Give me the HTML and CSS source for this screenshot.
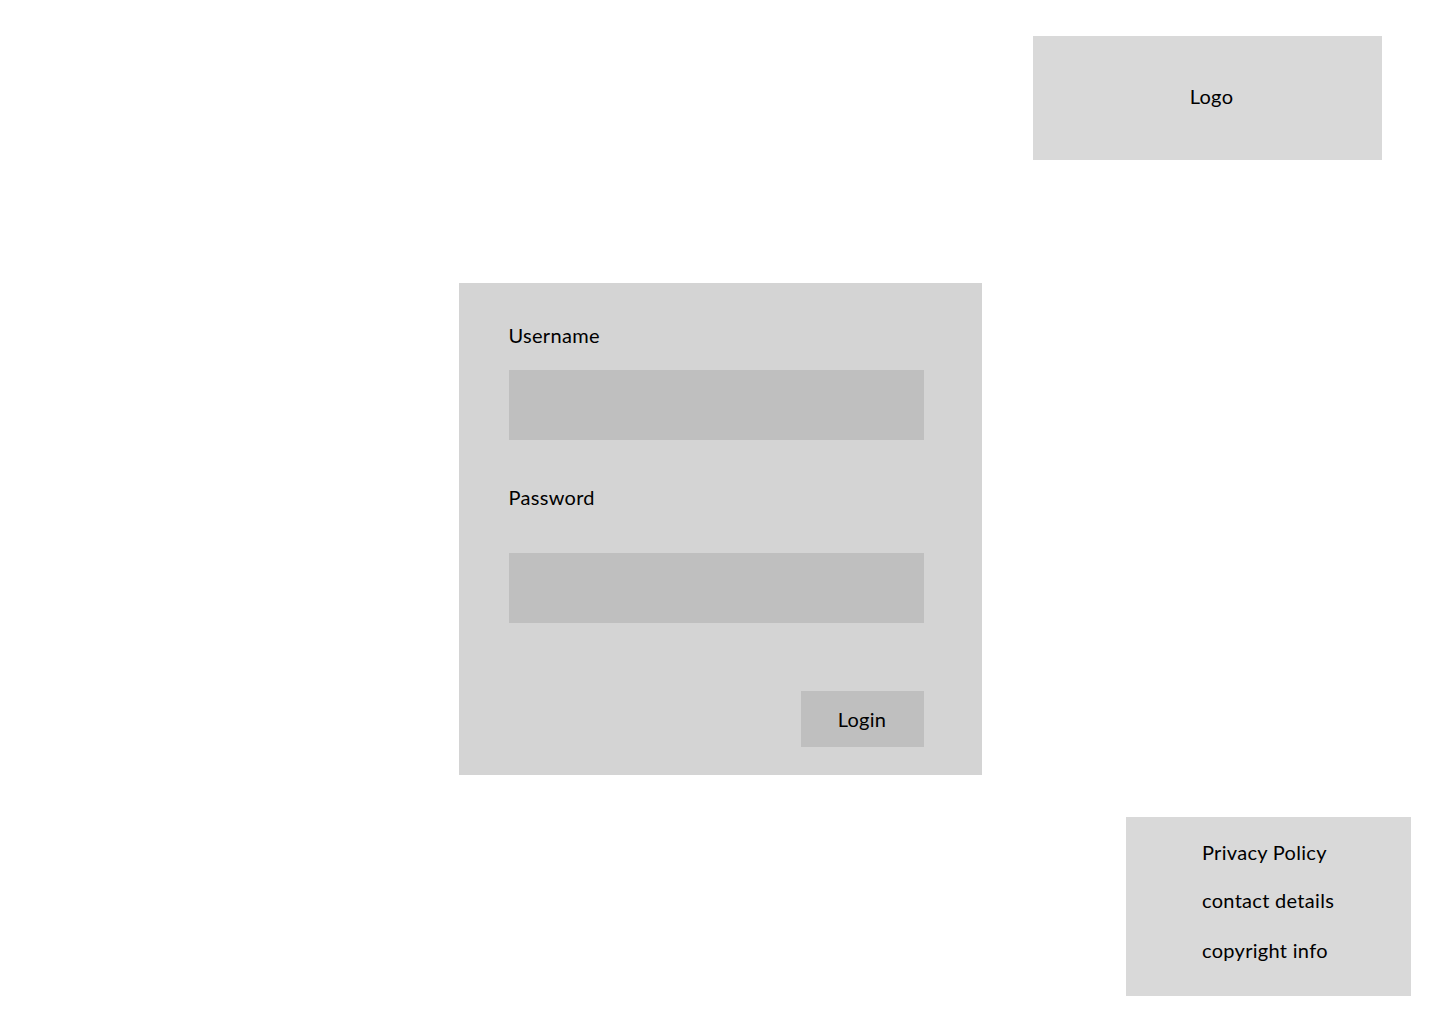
FILE: index.html
```html
<!DOCTYPE html>
<html lang="en">
  <head>
    <meta charset="UTF-8" />
    <meta name="viewport" content="width=device-width, initial-scale=1.0" />
    <title>Login</title>
    <link rel="stylesheet" href="styles.css">
  </head>
  <body>
    <header class="header">
      <div class="logo">Logo</div>
    </header>

    <main class="main">
      <form class="login-card" onsubmit="return false">
        <label class="field-label" for="username">Username</label>
        <input class="field-input" id="username" type="text" />

        <label class="field-label password-label" for="password">Password</label>
        <input class="field-input" id="password" type="password" />

        <div class="actions">
          <button class="login-btn" type="submit">Login</button>
        </div>
      </form>
    </main>

    <footer class="footer">
      <ul class="footer-links">
        <li><a href="#">Privacy Policy</a></li>
        <li><a href="#">contact details</a></li>
        <li><a href="#">copyright info</a></li>
      </ul>
    </footer>
  </body>
</html>
```

FILE: styles.css
```css
/* reset */
body,
ul,
li {
  margin: 0;
  padding: 0;
}

li {
  list-style-type: none;
}

a {
  color: #000;
  text-decoration: none;
}

body {
  background-color: #fff;
  font-family: "Lato", "Noto Sans", sans-serif;
  font-size: 20px;
  letter-spacing: 0.3px;
  color: #000;
}

/* header */
.header {
  display: flex;
  justify-content: flex-end;
  padding: 36px 58px 0 0;
}

.logo {
  width: 349px;
  height: 124px;
  display: flex;
  align-items: center;
  justify-content: center;
  padding: 0 0 4px 8px;
  box-sizing: border-box;
  background-color: #d9d9d9;
}

/* login card */
.main {
  display: flex;
  justify-content: center;
  margin-top: 123px;
}

.login-card {
  width: 523px;
  height: 492px;
  box-sizing: border-box;
  padding: 40px 58px 0 50px;
  display: flex;
  flex-direction: column;
  background-color: #d4d4d4;
}

.field-label {
  line-height: 24px;
}

.field-input {
  height: 70px;
  margin: 23px 0 0;
  padding: 0;
  border: none;
  outline: none;
  background-color: #bfbfbf;
}

.password-label {
  margin-top: 45px;
}

.password-label + .field-input {
  margin-top: 44px;
}

.actions {
  display: flex;
  justify-content: flex-end;
  margin-top: 68px;
}

.login-btn {
  width: 123px;
  height: 56px;
  border: none;
  padding: 0;
  font-family: inherit;
  font-size: 20px;
  letter-spacing: inherit;
  color: #000;
  background-color: #bfbfbf;
  cursor: pointer;
}

/* footer */
.footer {
  display: flex;
  justify-content: flex-end;
  margin-top: 42px;
  padding-right: 29px;
}

.footer-links {
  width: 285px;
  height: 179px;
  box-sizing: border-box;
  padding: 23px 0 0 76px;
  display: flex;
  flex-direction: column;
  gap: 24px;
  background-color: #d9d9d9;
}

.footer-links li {
  line-height: 24px;
}

.footer-links li:last-child {
  margin-top: 2px;
}
```
